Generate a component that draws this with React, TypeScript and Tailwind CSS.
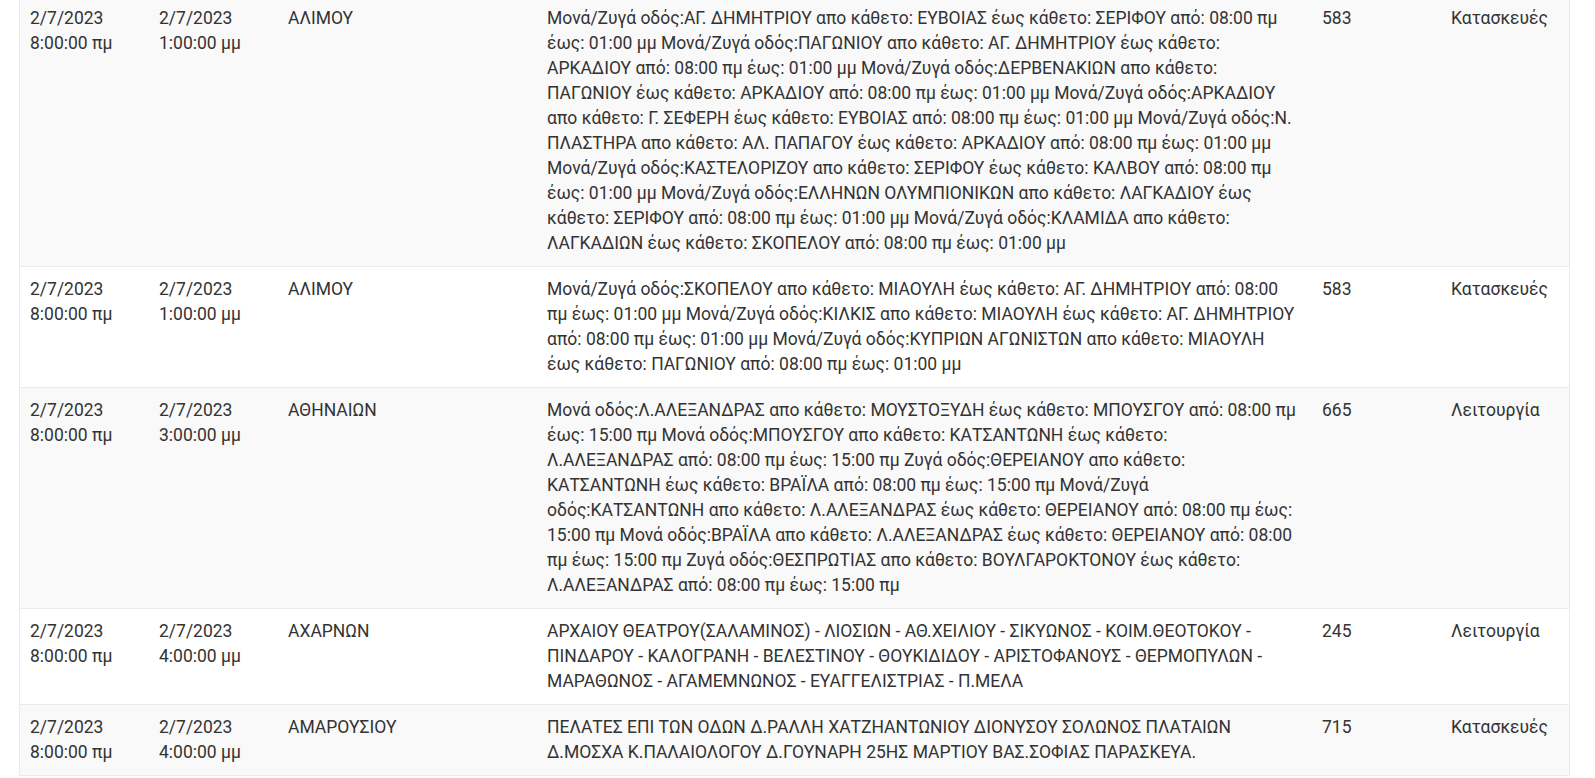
import React from 'react';

// --- Types ---
interface Outage {
    from: [string, string];
    to: [string, string];
    area: string;
    streets: string[]; // pre-broken lines, so the wrap matches the source table
    code: string;
    kind: string;
}

// --- Data ---
const rows: Outage[] = [
    {
        from: ['2/7/2023', '8:00:00 πμ'],
        to: ['2/7/2023', '1:00:00 μμ'],
        area: 'ΑΛΙΜΟΥ',
        streets: [
            'Μονά/Ζυγά οδός:ΑΓ. ΔΗΜΗΤΡΙΟΥ απο κάθετο: ΕΥΒΟΙΑΣ έως κάθετο: ΣΕΡΙΦΟΥ από: 08:00 πμ',
            'έως: 01:00 μμ Μονά/Ζυγά οδός:ΠΑΓΩΝΙΟΥ απο κάθετο: ΑΓ. ΔΗΜΗΤΡΙΟΥ έως κάθετο:',
            'ΑΡΚΑΔΙΟΥ από: 08:00 πμ έως: 01:00 μμ Μονά/Ζυγά οδός:ΔΕΡΒΕΝΑΚΙΩΝ απο κάθετο:',
            'ΠΑΓΩΝΙΟΥ έως κάθετο: ΑΡΚΑΔΙΟΥ από: 08:00 πμ έως: 01:00 μμ Μονά/Ζυγά οδός:ΑΡΚΑΔΙΟΥ',
            'απο κάθετο: Γ. ΣΕΦΕΡΗ έως κάθετο: ΕΥΒΟΙΑΣ από: 08:00 πμ έως: 01:00 μμ Μονά/Ζυγά οδός:Ν.',
            'ΠΛΑΣΤΗΡΑ απο κάθετο: ΑΛ. ΠΑΠΑΓΟΥ έως κάθετο: ΑΡΚΑΔΙΟΥ από: 08:00 πμ έως: 01:00 μμ',
            'Μονά/Ζυγά οδός:ΚΑΣΤΕΛΟΡΙΖΟΥ απο κάθετο: ΣΕΡΙΦΟΥ έως κάθετο: ΚΑΛΒΟΥ από: 08:00 πμ',
            'έως: 01:00 μμ Μονά/Ζυγά οδός:ΕΛΛΗΝΩΝ ΟΛΥΜΠΙΟΝΙΚΩΝ απο κάθετο: ΛΑΓΚΑΔΙΟΥ έως',
            'κάθετο: ΣΕΡΙΦΟΥ από: 08:00 πμ έως: 01:00 μμ Μονά/Ζυγά οδός:ΚΛΑΜΙΔΑ απο κάθετο:',
            'ΛΑΓΚΑΔΙΩΝ έως κάθετο: ΣΚΟΠΕΛΟΥ από: 08:00 πμ έως: 01:00 μμ',
        ],
        code: '583',
        kind: 'Κατασκευές',
    },
    {
        from: ['2/7/2023', '8:00:00 πμ'],
        to: ['2/7/2023', '1:00:00 μμ'],
        area: 'ΑΛΙΜΟΥ',
        streets: [
            'Μονά/Ζυγά οδός:ΣΚΟΠΕΛΟΥ απο κάθετο: ΜΙΑΟΥΛΗ έως κάθετο: ΑΓ. ΔΗΜΗΤΡΙΟΥ από: 08:00',
            'πμ έως: 01:00 μμ Μονά/Ζυγά οδός:ΚΙΛΚΙΣ απο κάθετο: ΜΙΑΟΥΛΗ έως κάθετο: ΑΓ. ΔΗΜΗΤΡΙΟΥ',
            'από: 08:00 πμ έως: 01:00 μμ Μονά/Ζυγά οδός:ΚΥΠΡΙΩΝ ΑΓΩΝΙΣΤΩΝ απο κάθετο: ΜΙΑΟΥΛΗ',
            'έως κάθετο: ΠΑΓΩΝΙΟΥ από: 08:00 πμ έως: 01:00 μμ',
        ],
        code: '583',
        kind: 'Κατασκευές',
    },
    {
        from: ['2/7/2023', '8:00:00 πμ'],
        to: ['2/7/2023', '3:00:00 μμ'],
        area: 'ΑΘΗΝΑΙΩΝ',
        streets: [
            'Μονά οδός:Λ.ΑΛΕΞΑΝΔΡΑΣ απο κάθετο: ΜΟΥΣΤΟΞΥΔΗ έως κάθετο: ΜΠΟΥΣΓΟΥ από: 08:00 πμ',
            'έως: 15:00 πμ Μονά οδός:ΜΠΟΥΣΓΟΥ απο κάθετο: ΚΑΤΣΑΝΤΩΝΗ έως κάθετο:',
            'Λ.ΑΛΕΞΑΝΔΡΑΣ από: 08:00 πμ έως: 15:00 πμ Ζυγά οδός:ΘΕΡΕΙΑΝΟΥ απο κάθετο:',
            'ΚΑΤΣΑΝΤΩΝΗ έως κάθετο: ΒΡΑΪΛΑ από: 08:00 πμ έως: 15:00 πμ Μονά/Ζυγά',
            'οδός:ΚΑΤΣΑΝΤΩΝΗ απο κάθετο: Λ.ΑΛΕΞΑΝΔΡΑΣ έως κάθετο: ΘΕΡΕΙΑΝΟΥ από: 08:00 πμ έως:',
            '15:00 πμ Μονά οδός:ΒΡΑΪΛΑ απο κάθετο: Λ.ΑΛΕΞΑΝΔΡΑΣ έως κάθετο: ΘΕΡΕΙΑΝΟΥ από: 08:00',
            'πμ έως: 15:00 πμ Ζυγά οδός:ΘΕΣΠΡΩΤΙΑΣ απο κάθετο: ΒΟΥΛΓΑΡΟΚΤΟΝΟΥ έως κάθετο:',
            'Λ.ΑΛΕΞΑΝΔΡΑΣ από: 08:00 πμ έως: 15:00 πμ',
        ],
        code: '665',
        kind: 'Λειτουργία',
    },
    {
        from: ['2/7/2023', '8:00:00 πμ'],
        to: ['2/7/2023', '4:00:00 μμ'],
        area: 'ΑΧΑΡΝΩΝ',
        streets: [
            'ΑΡΧΑΙΟΥ ΘΕΑΤΡΟΥ(ΣΑΛΑΜΙΝΟΣ) - ΛΙΟΣΙΩΝ - ΑΘ.ΧΕΙΛΙΟΥ - ΣΙΚΥΩΝΟΣ - ΚΟΙΜ.ΘΕΟΤΟΚΟΥ -',
            'ΠΙΝΔΑΡΟΥ - ΚΑΛΟΓΡΑΝΗ - ΒΕΛΕΣΤΙΝΟΥ - ΘΟΥΚΙΔΙΔΟΥ - ΑΡΙΣΤΟΦΑΝΟΥΣ - ΘΕΡΜΟΠΥΛΩΝ -',
            'ΜΑΡΑΘΩΝΟΣ - ΑΓΑΜΕΜΝΩΝΟΣ - ΕΥΑΓΓΕΛΙΣΤΡΙΑΣ - Π.ΜΕΛΑ',
        ],
        code: '245',
        kind: 'Λειτουργία',
    },
    {
        from: ['2/7/2023', '8:00:00 πμ'],
        to: ['2/7/2023', '4:00:00 μμ'],
        area: 'ΑΜΑΡΟΥΣΙΟΥ',
        streets: [
            'ΠΕΛΑΤΕΣ ΕΠΙ ΤΩΝ ΟΔΩΝ Δ.ΡΑΛΛΗ ΧΑΤΖΗΑΝΤΩΝΙΟΥ ΔΙΟΝΥΣΟΥ ΣΟΛΩΝΟΣ ΠΛΑΤΑΙΩΝ',
            'Δ.ΜΟΣΧΑ Κ.ΠΑΛΑΙΟΛΟΓΟΥ Δ.ΓΟΥΝΑΡΗ 25ΗΣ ΜΑΡΤΙΟΥ ΒΑΣ.ΣΟΦΙΑΣ ΠΑΡΑΣΚΕΥΑ.',
        ],
        code: '715',
        kind: 'Κατασκευές',
    },
];

// --- Outages Table ---
export default function App() {
    return (
        <div className="min-h-screen bg-white font-[Roboto,sans-serif] text-[17.5px] leading-[25px] text-[#333333]">
            <div className="-mt-[4px] ml-[19px] w-[1551px] border-x border-[#ebebeb]">
                <table className="w-full table-fixed border-collapse">
                    <colgroup>
                        <col className="w-[129px]" />
                        <col className="w-[129px]" />
                        <col className="w-[259px]" />
                        <col className="w-[775px]" />
                        <col className="w-[129px]" />
                        <col className="w-[128px]" />
                    </colgroup>
                    <tbody>
                        {rows.map((r, i) => (
                            <tr key={i} className={`border-b border-[#ebebeb] ${i % 2 === 0 ? 'bg-[#f9f9f9]' : 'bg-white'}`}>
                                <td className="p-[10px] align-top">
                                    {r.from[0]}
                                    <br />
                                    {r.from[1]}
                                </td>
                                <td className="p-[10px] align-top">
                                    {r.to[0]}
                                    <br />
                                    {r.to[1]}
                                </td>
                                <td className="p-[10px] align-top">{r.area}</td>
                                <td className="p-[10px] align-top">
                                    {r.streets.map((line, j) => (
                                        <span key={j} className="block whitespace-nowrap">
                                            {line}
                                        </span>
                                    ))}
                                </td>
                                <td className="p-[10px] align-top">{r.code}</td>
                                <td className="p-[10px] align-top">{r.kind}</td>
                            </tr>
                        ))}
                    </tbody>
                </table>
            </div>
        </div>
    );
}
